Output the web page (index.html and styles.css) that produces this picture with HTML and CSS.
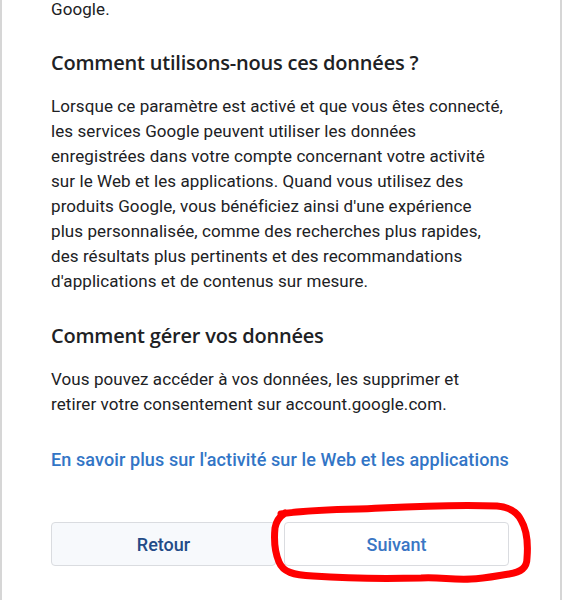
FILE: index.html
```html
<!DOCTYPE html>
<html>

<head>
    <meta charset="utf-8" />
    <title>Activité sur le Web et les applications</title>
    <meta name="viewport" content="width=device-width, initial-scale=1">
    <link rel="stylesheet" href="styles.css">
</head>

<body>
    <div class="page">
        <p class="text first">Google.</p>

        <h2 class="title">Comment utilisons-nous ces données ?</h2>
        <p class="text">
            Lorsque ce paramètre est activé et que vous êtes connecté,<br>
            les services Google peuvent utiliser les données<br>
            enregistrées dans votre compte concernant votre activité<br>
            sur le Web et les applications. Quand vous utilisez des<br>
            produits Google, vous bénéficiez ainsi d'une expérience<br>
            plus personnalisée, comme des recherches plus rapides,<br>
            des résultats plus pertinents et des recommandations<br>
            d'applications et de contenus sur mesure.
        </p>

        <h2 class="title">Comment gérer vos données</h2>
        <p class="text">
            Vous pouvez accéder à vos données, les supprimer et<br>
            retirer votre consentement sur account.google.com.
        </p>

        <a class="more" href="#">En savoir plus sur l'activité sur le Web et les applications</a>

        <div class="actions">
            <button class="btn back">Retour</button>
            <button class="btn next">Suivant</button>
            <!-- red hand-drawn circle around "Suivant" -->
            <svg class="scribble" width="480" height="80" viewBox="0 -20 480 80">
                <path d="M230,-8 C262,-13 300,-12 330,-14 C370,-16 420,-17 446,-16 C458,-15 466,-10 470,-2
                         C476,8 477,24 476,36 C476,46 470,50 458,52 C440,55 430,57 420,57 C400,58 390,55 370,56
                         C330,57 290,56 262,54 C242,53 232,50 228,40 C223,28 223,16 224,6 C225,0 228,-5 234,-9"
                      fill="none" stroke="#ff0000" stroke-width="7" stroke-linecap="round" stroke-linejoin="round" />
            </svg>
        </div>
    </div>
</body>

</html>
```

FILE: styles.css
```css
/* page */

body {
    margin: 0;
    background: #ffffff;
    color: #202124;
    font-family: Roboto, "Liberation Sans", sans-serif;
}

.page {
    box-sizing: border-box;
    width: 562px;
    min-height: 600px;
    border-left: 2px solid #d6d6d6;
    border-right: 2px solid #d6d6d6;
    padding: 0 40px 0 49px;
    overflow: hidden;
}

/* text */

.text {
    margin: 0;
    font-size: 17px;
    line-height: 25px;
    letter-spacing: 0.08px;
    white-space: nowrap;
}

.first {
    margin-top: -3px;
}

.title {
    margin: 29px 0 19px 0;
    font-family: "Open Sans", sans-serif;
    font-size: 20px;
    font-weight: 600;
    line-height: 24px;
    letter-spacing: -0.2px;
    color: #202124;
}

.title + .text {
    margin-bottom: 30px;
}

.more {
    display: block;
    margin-top: 1px;
    font-size: 18px;
    font-weight: 500;
    line-height: 25px;
    letter-spacing: 0.1px;
    color: #3275c6;
    text-decoration: none;
    white-space: nowrap;
}

/* buttons */

.actions {
    position: relative;
    display: flex;
    gap: 8px;
    width: 458px;
    margin-top: 50px;
}

.btn {
    flex: 1;
    height: 44px;
    border: 1px solid #dadce0;
    border-radius: 4px;
    background: #ffffff;
    font-family: Roboto, sans-serif;
    font-size: 18px;
    font-weight: 500;
    color: #3a76c4;
}

.back {
    background: #f7f9fc;
    color: #234b87;
}

.scribble {
    position: absolute;
    left: 0;
    top: -20px;
    overflow: visible;
    pointer-events: none;
}
```
